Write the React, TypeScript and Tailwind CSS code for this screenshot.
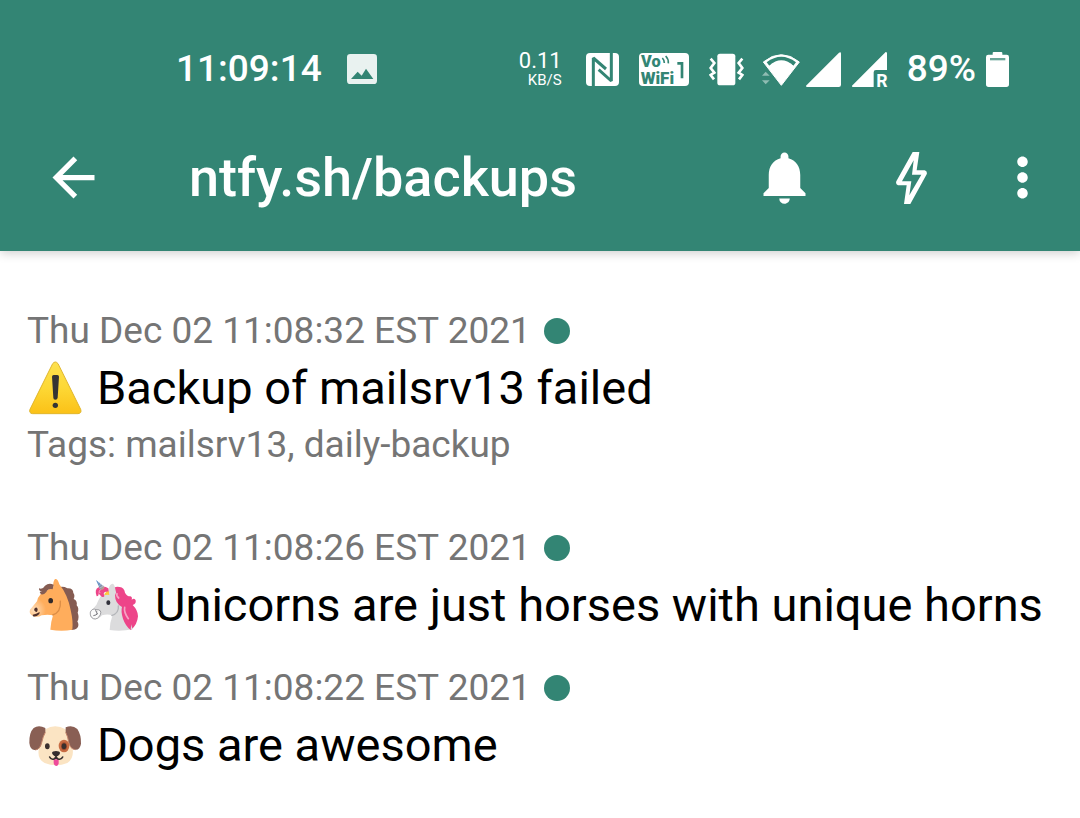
import type { ReactNode } from "react";
import { MdArrowBack, MdMoreVert, MdNotifications } from "react-icons/md";

function PictureIcon() {
  return (
    <svg className="h-[30px] w-[30px]" viewBox="0 0 90 90" aria-hidden="true">
      <rect width="90" height="90" rx="10" fill="#e9f2f0" />
      <path d="M12 75 32 53 44 65 57 44 79 75Z" fill="#338574" />
    </svg>
  );
}

function NfcIcon() {
  return (
    <svg className="h-[33px] w-[33px]" viewBox="0 0 99 99" aria-hidden="true">
      <rect width="99" height="99" rx="12" fill="#fff" />
      <path
        d="M22 99V15L60 48M76 0V84L38 50"
        fill="none"
        stroke="#338574"
        strokeWidth="9"
        strokeLinejoin="bevel"
      />
    </svg>
  );
}

function VoWifiIcon() {
  return (
    <svg className="h-[33px] w-[50px] overflow-visible" viewBox="0 0 150 99" role="img" aria-label="VoWiFi 1">
      <rect width="150" height="99" rx="12" fill="#fff" />
      <g fill="#338574" fontFamily="Roboto, sans-serif" fontWeight="900">
        <text x="6" y="43" fontSize="49">Vo</text>
        <text x="5" y="92" fontSize="51">WiFi</text>
      </g>
      <path d="M70 15q6 6 6 15M80 9q9 9 8 22" fill="none" stroke="#338574" strokeWidth="5" />
      <path d="M115 27h18v49h-8V35h-10Z" fill="#338574" />
    </svg>
  );
}

function VibrateIcon() {
  return (
    <svg className="h-[33px] w-[35px]" viewBox="0 0 105 99" aria-hidden="true">
      <rect x="25" y="2" width="54" height="95" rx="8" fill="#fff" />
      <path
        d="M5 17 16 30 5 45 16 59 5 66 15 79M100 17 89 30 100 45 89 59 100 66 90 79"
        fill="none"
        stroke="#fff"
        strokeWidth="8"
      />
    </svg>
  );
}

function WifiIcon() {
  return (
    <svg className="h-[33px] w-[39px]" viewBox="0 0 117 99" aria-hidden="true">
      <path d="M58 97 4 27Q58-17 112 27Z" fill="#fff" stroke="#fff" strokeWidth="3" strokeLinejoin="round" />
      <path d="M14 28Q58-5 102 28L94 38Q58 12 22 38Z" fill="#338574" />
      <path d="M22 38Q58 6 94 38L58 84Z" fill="#fff" />
      <path d="M0 68 11 56 23 68ZM0 82H23L11 94Z" fill="#fff" opacity=".45" />
    </svg>
  );
}

function SignalIcon({ roaming = false }: { roaming?: boolean }) {
  return (
    <svg className="h-[35px] w-[35px] overflow-visible" viewBox="0 0 105 105" aria-hidden="true">
      {roaming ? (
        <>
          <path d="M0 101 101 0Q105 0 105 4V54H72Q65 54 65 61V105H2Q0 105 0 101Z" fill="#fff" />
          <text x="73" y="104" fill="#fff" fontFamily="Roboto, sans-serif" fontSize="53" fontWeight="700">
            R
          </text>
        </>
      ) : (
        <path d="M0 101 99 2Q105-2 105 5V98Q105 105 98 105H3Q0 105 0 101Z" fill="#fff" />
      )}
    </svg>
  );
}

function BatteryIcon() {
  return (
    <svg className="h-[35px] w-[23px]" viewBox="0 0 69 105" aria-hidden="true">
      <path
        d="M20 8V3q0-3 3-3h23q3 0 3 3v5h13q7 0 7 7v82q0 8-8 8H8q-8 0-8-8V15q0-7 7-7Z"
        fill="#fff"
      />
      <path d="M12 18H58V25H12Z" fill="#6aa698" />
    </svg>
  );
}

function BoltIcon() {
  return (
    <svg className="h-[52px] w-[31px]" viewBox="0 0 93 156" aria-hidden="true">
      <path
        fill="#fff"
        fillRule="evenodd"
        d="M50 0H70L62 55H86Q95 58 92 67L43 156H24L32 100H6Q-2 97 1 88ZM53 25 18 88H46L40 130 76 68H48Z"
      />
    </svg>
  );
}

function WarningEmoji() {
  return (
    <svg className="size-[58px]" viewBox="21 27 174 174" role="img" aria-label="Warning">
      <defs>
        <linearGradient id="warn" x1="0" y1="0" x2="0" y2="1">
          <stop offset="0" stopColor="#fde14f" />
          <stop offset=".5" stopColor="#fdd835" />
          <stop offset="1" stopColor="#fbc117" />
        </linearGradient>
      </defs>
      <path
        d="M98 41Q106 31 114 41L182 178Q186 190 174 191H38Q26 190 30 178Z"
        fill="url(#warn)"
        stroke="#e0b62c"
        strokeWidth="3"
      />
      <path d="M96 80Q96 75 101 75H112Q117 75 117 80L113 143Q112 149 106 149T100 143Z" fill="#343434" />
      <circle cx="106" cy="166" r="8" fill="#343434" />
    </svg>
  );
}

function HorseEmoji() {
  return (
    <svg className="size-[58px]" viewBox="21 18 174 174" role="img" aria-label="Horse">
      <defs>
        <radialGradient id="horse-muzzle" gradientUnits="userSpaceOnUse" cx="42" cy="120" r="36">
          <stop offset="0" stopColor="#ffe0bd" />
          <stop offset="1" stopColor="#ffad5c" />
        </radialGradient>
      </defs>
      <path
        d="M116 52Q130 48 142 55Q160 54 160 69Q166 77 161 87Q173 92 170 106Q178 115 173 128Q179 143 172 154Q179 166 171 175Q163 183 145 179Q120 100 116 52Z"
        fill="#855c52"
      />
      <path
        d="M105 27Q113 25 118 43Q143 74 152 120Q160 155 157 179Q125 185 91 179Q92 158 99 136Q83 132 65 136Q51 144 40 138Q26 132 30 119Q39 109 51 94Q57 68 78 62L100 52Q98 35 105 27Z"
        fill="url(#horse-muzzle)"
      />
      <path d="M121 92Q124 128 97 135" fill="none" stroke="#dc8d46" strokeWidth="4" />
      <path
        d="M57 55Q68 59 75 47Q86 38 101 44L98 58Q84 55 79 66Q66 80 60 68Q57 64 66 66Q56 63 57 55Z"
        fill="#855c52"
      />
      <ellipse cx="92" cy="92" rx="7" ry="8" fill="#30292a" />
      <path d="M43 116Q51 108 53 118Q53 128 47 125Q40 121 43 116ZM38 134Q48 133 59 126L58 132Q48 142 39 139Z" fill="#50312c" />
    </svg>
  );
}

function UnicornEmoji() {
  return (
    <svg className="size-[58px]" viewBox="195 18 174 174" role="img" aria-label="Unicorn">
      <defs>
        <linearGradient id="unicorn-horn" x1="0" y1="0" x2="1" y2="1">
          <stop offset="0" stopColor="#4385cc" />
          <stop offset=".5" stopColor="#738fb5" />
          <stop offset="1" stopColor="#e2a575" />
        </linearGradient>
      </defs>
      <path
        d="M278 59Q284 47 299 51Q313 53 315 68Q320 79 331 79Q338 81 335 89Q344 82 347 91Q349 102 338 105Q354 121 354 139Q352 164 333 180Q320 174 313 145L284 93Z"
        fill="#ed4589"
      />
      <path
        d="M275 42Q282 39 285 53Q286 68 297 82Q319 113 338 178Q302 185 269 180Q269 160 277 137Q265 131 246 136Q235 150 222 148Q208 143 211 130Q215 120 229 105Q235 90 241 80Q251 69 266 65Q265 47 275 42Z"
        fill="#dcdcdd"
      />
      <path
        d="M288 68Q297 63 306 73Q321 90 323 109Q339 123 332 180Q317 169 309 146Q302 125 306 111Q285 100 285 76Z"
        fill="#ed4589"
      />
      <path d="M314 112Q311 127 325 146M291 71Q288 77 296 84" fill="none" stroke="#f6a4c5" strokeWidth="5" strokeLinecap="round" />
      <path d="M295 106Q298 130 274 137" fill="none" stroke="#b4b6ba" strokeWidth="4" />
      <path
        d="M230 79Q222 58 236 52Q253 46 265 55L267 69Q254 61 251 71Q257 84 245 80L235 70Q238 78 230 79Z"
        fill="#ed4589"
      />
      <path d="M241 68Q232 70 242 58" fill="none" stroke="#f9a4c6" strokeWidth="3" />
      <path d="M253 76Q254 66 266 63L268 75Q261 73 253 76Z" fill="#fbc83d" />
      <path d="M228 30 254 52Q248 64 240 58Z" fill="url(#unicorn-horn)" />
      <path d="m232 40 7-3m-4 10 10-4m-7 12 13-8" stroke="#b3cae7" strokeWidth="2" />
      <ellipse cx="265" cy="98" rx="6" ry="7" fill="#30303a" />
      <path d="M211 126Q218 113 228 119Q247 118 241 134Q233 150 220 146Q209 140 211 126Z" fill="#fafafa" stroke="#77777d" strokeWidth="2" />
      <path d="M225 122q8 0 5 9M220 137q9-1 14-7" fill="none" stroke="#77777d" strokeWidth="3" />
    </svg>
  );
}

function DogEmoji() {
  return (
    <svg className="size-[58px]" viewBox="21 3 174 174" role="img" aria-label="Dog">
      <path
        d="M76 43Q105 24 137 43Q153 62 157 96Q164 130 142 144Q108 158 74 144Q52 132 56 105Q59 65 76 43Z"
        fill="#fbe4c3"
      />
      <path
        d="M76 39Q56 28 41 39Q27 53 28 84Q31 107 46 105Q62 103 65 83Q69 64 76 52ZM137 37Q157 28 172 42Q184 60 183 86Q180 105 166 104Q151 103 146 82Q144 65 137 52Z"
        fill="#895f54"
      />
      <path d="M76 52Q69 64 65 83Q60 103 46 105M137 52Q144 65 146 82Q151 103 166 104" fill="none" stroke="#c5866c" strokeWidth="3" />
      <ellipse cx="132" cy="93" rx="16" ry="19" fill="#c86c43" />
      <ellipse cx="132" cy="94" rx="9" ry="12" fill="#a9502f" />
      <ellipse cx="82" cy="94" rx="7" ry="9" fill="#3b302e" />
      <ellipse cx="132" cy="94" rx="7" ry="9" fill="#3b302e" />
      <path d="M101 133H116V146Q113 154 108 153Q102 152 101 145Z" fill="#ee4b9b" />
      <path d="M96 113Q97 108 108 108T120 113Q120 121 108 125Q97 121 96 113Z" fill="#352d2d" />
      <path d="M89 126Q93 135 102 132L108 127 114 132Q124 135 128 126M108 122V130" fill="none" stroke="#352d2d" strokeWidth="5" strokeLinecap="round" />
    </svg>
  );
}

type Message = {
  time: string;
  title: string;
  emojis: ReactNode;
  tags?: string;
};

const messages: Message[] = [
  {
    time: "Thu Dec 02 11:08:32 EST 2021",
    title: "Backup of mailsrv13 failed",
    emojis: <WarningEmoji />,
    tags: "Tags: mailsrv13, daily-backup",
  },
  {
    time: "Thu Dec 02 11:08:26 EST 2021",
    title: "Unicorns are just horses with unique horns",
    emojis: (
      <>
        <HorseEmoji />
        <UnicornEmoji />
      </>
    ),
  },
  {
    time: "Thu Dec 02 11:08:22 EST 2021",
    title: "Dogs are awesome",
    emojis: <DogEmoji />,
  },
];

function MessageItem({ time, title, emojis, tags }: Message) {
  return (
    <li className={tags ? "pb-[60px]" : "pb-8"}>
      <div className="flex items-center gap-[13px] text-[37px] leading-[43px] text-[#757575]">
        <time>{time}</time>
        <span className="size-[26px] rounded-full bg-[#338574]" />
      </div>
      <div className="mt-[7px] flex items-center gap-3">
        <span className="flex shrink-0">{emojis}</span>
        <h2 className="text-[47px] leading-[58px] whitespace-nowrap text-black">{title}</h2>
      </div>
      {tags && <p className="mt-[6px] text-[37px] leading-[43px] text-[#757575]">{tags}</p>}
    </li>
  );
}

export default function App() {
  return (
    <div className="min-h-screen overflow-x-hidden bg-white font-[Roboto,sans-serif]">
      <header className="bg-[#338574] text-white shadow-[0_2px_10px_rgba(0,0,0,0.2)]">
        <div className="flex items-center justify-between pt-11 pr-[71px] pl-44">
          <div className="flex items-center gap-[25px]">
            <span className="text-[37px] leading-[50px] font-medium">11:09:14</span>
            <PictureIcon />
          </div>
          <div className="flex items-center">
            <div className="mr-6 text-right">
              <div className="text-[22px] leading-[22px]">0.11</div>
              <div className="text-[15px] leading-[17px]">KB/S</div>
            </div>
            <div className="flex items-center gap-5">
              <NfcIcon />
              <VoWifiIcon />
              <VibrateIcon />
            </div>
            <div className="ml-[18px] flex items-center gap-[5px]">
              <WifiIcon />
              <SignalIcon />
            </div>
            <div className="ml-[11px] flex items-center">
              <SignalIcon roaming />
              <span className="mr-[10px] ml-5 text-[37px] leading-[50px] font-medium">89%</span>
              <BatteryIcon />
            </div>
          </div>
        </div>
        <div className="flex items-center pt-[52px] pr-[26px] pb-[42px] pl-[42px]">
          <button type="button" aria-label="Back">
            <MdArrowBack className="size-[63px]" />
          </button>
          <h1 className="ml-[84px] flex-1 text-[54px] leading-[63px] font-medium">ntfy.sh/backups</h1>
          <button type="button" aria-label="Notifications">
            <MdNotifications className="size-[63px]" />
          </button>
          <button type="button" aria-label="Instant delivery" className="ml-20">
            <BoltIcon />
          </button>
          <button type="button" aria-label="More options" className="ml-16">
            <MdMoreVert className="size-[63px]" />
          </button>
        </div>
      </header>
      <main className="px-[27px] pt-[58px]">
        <ul>
          {messages.map((message) => (
            <MessageItem key={message.time} {...message} />
          ))}
        </ul>
      </main>
    </div>
  );
}
